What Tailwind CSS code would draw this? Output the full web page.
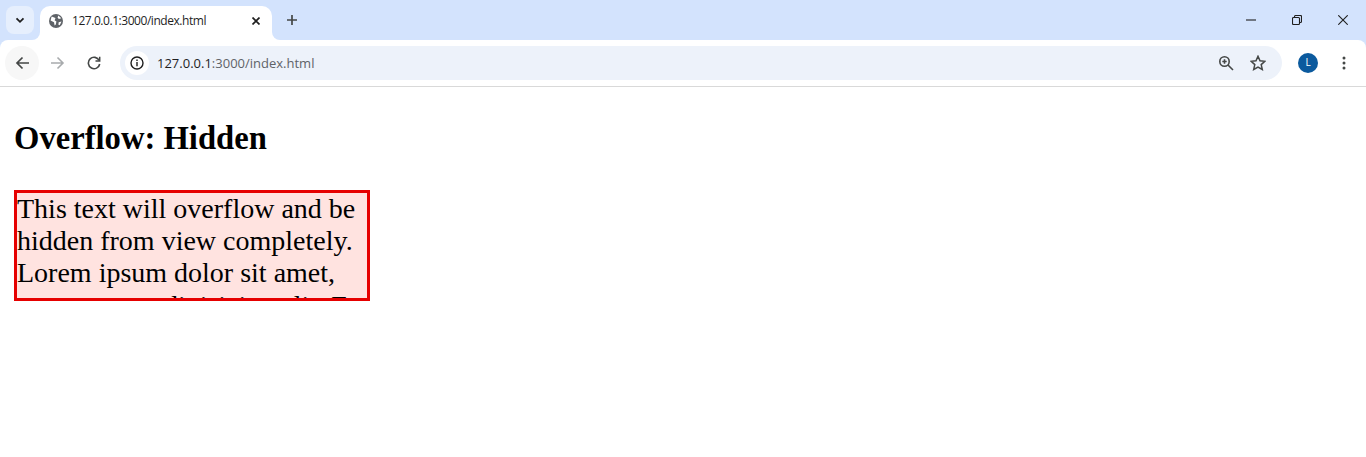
<!DOCTYPE html>
<html><head><meta charset="utf-8"><script src="https://cdn.jsdelivr.net/npm/@tailwindcss/browser@4"></script></head>
<body class="bg-white overflow-hidden h-[457px] font-['Liberation_Serif',serif]">
<header class="h-[87px] flex flex-col bg-[#d3e3fd] font-['Open_Sans','Noto_Sans',sans-serif] text-[#3c4043]">
  <div class="h-[40px] flex items-end relative">
    <div class="w-[28px] h-[28px] ml-[6px] mb-[6px] rounded-lg bg-[#e6effd] flex items-center justify-center">
      <svg width="12" height="12" viewBox="0 0 12 12" fill="none" stroke="#1f1f1f" stroke-width="1.8"><path d="M2.500 4.300 6 7.800l3.500-3.500"/></svg>
    </div>
    <div class="relative ml-[6px] w-[232px] h-[34px] bg-white rounded-t-[10px] flex items-center pl-[9px] pr-[12px] pb-[5px] text-[12px] text-[#1f1f1f]">
      <div class="absolute -left-[8px] bottom-0 w-[8px] h-[8px] bg-white"><div class="w-full h-full bg-[#d3e3fd] rounded-br-[8px]"></div></div>
      <div class="absolute -right-[8px] bottom-0 w-[8px] h-[8px] bg-white"><div class="w-full h-full bg-[#d3e3fd] rounded-bl-[8px]"></div></div>
      <svg width="14" height="14" viewBox="0 0 14 14" class="shrink-0"><circle cx="7" cy="7" r="7" fill="#5f6368"/><path d="M2.600 2.600 6.500 4 5.600 6.300l1.800 1.300-.6 2.900-1.200 1-.6-3.300-3.400-1.700zM9.300 1.500l3 2.700-2.400.9-1.300-1.300zM9.700 8.200l2.800-.7-1.800 3.800-1.300-.5z" fill="#fff"/></svg>
      <span class="ml-[9px] tracking-[-0.45px] whitespace-nowrap">127.0.0.1:3000/index.html</span>
      <svg width="8" height="8" viewBox="0 0 8 8" class="ml-auto" stroke="#1f1f1f" stroke-width="1.700"><path d="M.5.5l7 7M7.500.5l-7 7"/></svg>
    </div>
    <svg width="10" height="10" viewBox="0 0 10 10" class="ml-[15px] mb-[15px]" stroke="#444746" stroke-width="1.700"><path d="M5 0v10M0 5h10"/></svg>
    <div class="ml-auto flex items-center mb-[15px]">
      <svg width="10" height="10" viewBox="0 0 10 10" stroke="#1f1f1f" stroke-width="1.100"><path d="M0 5h10"/></svg>
      <svg width="10" height="10" viewBox="0 0 10 10" fill="none" stroke="#1f1f1f" stroke-width="1.100" class="ml-[36px]"><rect x=".5" y="2.500" width="7" height="7" rx="1"/><path d="M2.500 2.500V1.500a1 1 0 0 1 1-1h5a1 1 0 0 1 1 1v5a1 1 0 0 1-1 1H7.500"/></svg>
      <svg width="10" height="10" viewBox="0 0 10 10" stroke="#1f1f1f" stroke-width="1.100" class="ml-[36px] mr-[18px]"><path d="M.3.3l9.400 9.400M9.700.3l-9.400 9.400"/></svg>
    </div>
  </div>
  <div class="h-[47px] bg-white border-b border-[#d9d9d9] rounded-t-[8px] flex items-center pb-[1px] relative">
    <div class="w-[34px] h-[34px] ml-[5px] rounded-full bg-[#f7f7f7] flex items-center justify-center">
      <svg width="14" height="14" viewBox="0 0 14 14" fill="none" stroke="#444746" stroke-width="1.700"><path d="M14 7H2M7.500 1.500 2 7l5.500 5.500"/></svg>
    </div>
    <svg width="14" height="14" viewBox="0 0 14 14" fill="none" stroke="#a8abad" stroke-width="1.600" class="ml-[12px]"><path d="M0 7h12M6.500 1.500 12 7l-5.500 5.500"/></svg>
    <svg width="14" height="14" viewBox="0 0 14 14" fill="none" stroke="#444746" stroke-width="1.600" class="ml-[22px]"><path d="M12.200 4.500A5.700 5.700 0 1 0 12.700 8"/><path d="M12.700 .8v4.200H8.500" stroke-width="1.500"/></svg>
    <div class="ml-[19px] w-[1162px] h-[34px] rounded-full bg-[#edf2fa] flex items-center pl-[5px] pr-[16px] text-[13px]">
      <div class="w-[24px] h-[24px] rounded-full bg-white flex items-center justify-center">
        <svg width="14" height="14" viewBox="0 0 14 14" fill="none" stroke="#1f1f1f" stroke-width="1.400"><circle cx="7" cy="7" r="6"/><path d="M7 6v4.200M7 3.500v1.500"/></svg>
      </div>
      <span class="ml-[8px] mt-[2px] whitespace-nowrap"><span class="text-[#1f1f1f]">127.0.0.1</span><span class="text-[#5f6368]">:3000/index.html</span></span>
      <svg width="16" height="16" viewBox="0 0 16 16" fill="none" stroke="#444746" stroke-width="1.600" class="ml-auto"><circle cx="6.500" cy="6.500" r="4.700"/><path d="M10 10l5 5M4.300 6.500h4.400M6.500 4.300v4.400"/></svg>
      <svg width="16" height="16" viewBox="0 0 16 16" fill="none" stroke="#444746" stroke-width="1.500" class="ml-[16px]"><path d="M8 1.300l2 4.500 4.900.5-3.700 3.300 1.100 4.800L8 12l-4.300 2.400 1.100-4.800L1.100 6.300 6 5.800z"/></svg>
    </div>
    <div class="ml-[16px] w-[20px] h-[20px] rounded-full bg-[#0b5a9e] text-white text-[10px] flex items-center justify-center">L</div>
    <svg width="4" height="14" viewBox="0 0 4 14" fill="#444746" class="ml-[24px]"><circle cx="2" cy="2" r="1.500"/><circle cx="2" cy="7" r="1.500"/><circle cx="2" cy="12" r="1.500"/></svg>
  </div>
</header>
<main class="pl-[14px] text-black">
  <h1 class="mt-[33px] text-[32.640px] leading-[36px] font-bold">Overflow: Hidden</h1>
  <div class="mt-[34px] w-[356px] h-[111px] border-[3px] border-[#e60000] bg-[#ffe3e0] overflow-hidden text-[28px] leading-[32.200px]">This text will overflow and be hidden from view completely. Lorem ipsum dolor sit amet, consectetur adipisicing elit. Ea voluptatem.</div>
</main>
</body></html>
